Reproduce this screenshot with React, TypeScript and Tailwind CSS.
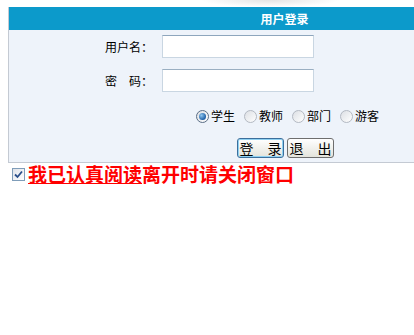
import React, { FC } from 'react';

const font = { fontFamily: '"Noto Sans CJK SC", "Liberation Sans", sans-serif' };

type RadioProps = { label: string; checked?: boolean };

const Radio: FC<RadioProps> = ({ label, checked }) => (
  <label className="flex items-center gap-[2px] mr-[9px] text-[12px] text-black">
    <span
      className={`flex items-center justify-center w-[13px] h-[13px] rounded-full border ${
        checked ? 'border-[#5a6e86]' : 'border-[#b3b9c2]'
      } bg-gradient-to-br from-[#dcdfe4] to-white`}
    >
      {checked && (
        <span className="w-[7px] h-[7px] rounded-full bg-[radial-gradient(circle_at_35%_35%,#8fc6ef,#1e5fa6_70%)]" />
      )}
    </span>
    <span>{label}</span>
  </label>
);

const App: FC = () => {
  return (
    <div className="relative w-[414px] h-[335px] overflow-hidden bg-white" style={font}>
      <div className="h-[7px] ml-[200px] w-[140px] bg-[radial-gradient(ellipse_at_50%_0%,#e4e4e4,transparent_70%)]" />
      <div className="ml-[8px] w-[552px] bg-[#eef3fa] border-l border-b border-[#c4cad3]">
        <div className="h-[23px] bg-[#0c9acb] flex items-center justify-center text-white font-bold text-[12px]">
          用户登录
        </div>
        <div className="pt-[5px]">
          <div className="flex items-center">
            <div className="w-[144px] text-right text-[12px] text-black">用户名：</div>
            <input
              type="text"
              className="ml-[9px] w-[152px] h-[23px] bg-white border border-[#c9d6e2] border-t-[#8ea6bd] outline-none"
            />
          </div>
          <div className="flex items-center mt-[11px]">
            <div className="w-[144px] text-right text-[12px] text-black">密　码：</div>
            <input
              type="password"
              className="ml-[9px] w-[152px] h-[23px] bg-white border border-[#c9d6e2] border-t-[#9aafc2] outline-none"
            />
          </div>
          <div className="flex items-center pl-[187px] mt-[14px] h-[20px]">
            <Radio label="学生" checked />
            <Radio label="教师" />
            <Radio label="部门" />
            <Radio label="游客" />
          </div>
          <div className="flex items-center pl-[228px] mt-[12px] pb-[4px] gap-[3px]">
            <button
              type="button"
              className="w-[47px] h-[20px] rounded-[3px] border border-[#3c6f9c] shadow-[inset_0_0_0_1px_#8fd1f2] bg-gradient-to-b from-white to-[#e4e4dc] text-[14px] leading-none text-black"
            >
              登　录
            </button>
            <button
              type="button"
              className="w-[47px] h-[20px] rounded-[3px] border border-[#6e6e6e] bg-gradient-to-b from-white to-[#e4e4dc] text-[14px] leading-none text-black"
            >
              退　出
            </button>
          </div>
        </div>
      </div>
      <div className="flex items-center pl-[12px] mt-[0px]">
        <span className="w-[13px] h-[13px] border border-[#7f9db9] bg-gradient-to-br from-[#dfe3ea] to-white flex items-center justify-center">
          <svg width="9" height="9" viewBox="0 0 9 9">
            <path d="M1 4.5 L3.5 7 L8 1.5" fill="none" stroke="#2a4f8a" strokeWidth="1.8" />
          </svg>
        </span>
        <span className="ml-[3px] text-[19px] font-bold text-[#ff0000] leading-[22px]">
          <span className="underline">我已认真阅读</span>离开时请关闭窗口
        </span>
      </div>
    </div>
  );
};

export default App;
